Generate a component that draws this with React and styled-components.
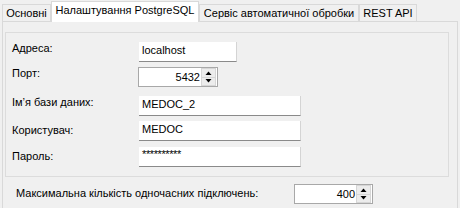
import React from "react";
import styled, { createGlobalStyle } from "styled-components";

const Global = createGlobalStyle`
  html, body { margin: 0; padding: 0; background: #f0f0f0; }
  body { font-family: "Liberation Sans", Arial, sans-serif; font-size: 11px; color: #000; }
`;

const Window = styled.div`
  width: 460px;
  height: 208px;
  overflow: hidden;
  background: #f0f0f0;
`;

const TabStrip = styled.div`
  display: flex;
  align-items: flex-end;
  height: 22px;
  padding-left: 2px;
`;

const Tab = styled.div`
  box-sizing: border-box;
  width: ${(p) => p.$w}px;
  height: ${(p) => (p.$active ? 21 : 17)}px;
  margin-bottom: ${(p) => (p.$active ? 0 : 1)}px;
  border: 1px solid #d9d9d9;
  border-bottom: none;
  background: ${(p) => (p.$active ? "#ffffff" : "#f0f0f0")};
  position: relative;
  z-index: ${(p) => (p.$active ? 2 : 0)};
  padding-top: 2px;
  line-height: 13px;
  text-align: center;
  white-space: nowrap;
`;

const Panel = styled.div`
  box-sizing: border-box;
  margin-top: -1px;
  margin-left: 2px;
  width: 456px;
  height: 200px;
  border: 1px solid #d9d9d9;
  padding: 10px 0 0 2px;
`;

const Group = styled.div`
  box-sizing: border-box;
  width: 444px;
  height: 145px;
  border: 1px solid #dcdcdc;
  padding: 9px 0 0 6px;
  display: flex;
  flex-direction: column;
`;

const Row = styled.div`
  display: flex;
  align-items: flex-start;
  height: 20px;
  margin-top: ${(p) => p.$mt || 0}px;
`;

const Label = styled.div`
  width: ${(p) => p.$w || 127}px;
  line-height: 13px;
  margin-top: ${(p) => p.$dy || 0}px;
  white-space: nowrap;
`;

const TextBox = styled.div`
  box-sizing: border-box;
  width: ${(p) => p.$w}px;
  height: 20px;
  background: #fff;
  border-bottom: 1px solid #8a8a8a;
  border-right: 1px solid #d4d4d4;
  padding: 2px 3px 0 3px;
  line-height: 13px;
  white-space: nowrap;
  overflow: hidden;
`;

const Password = styled.span`
  letter-spacing: -0.4px;
  position: relative;
  top: -1px;
`;

const Spinner = styled.div`
  box-sizing: border-box;
  width: ${(p) => p.$w}px;
  height: 20px;
  margin-left: ${(p) => p.$ml || 0}px;
  background: #fff;
  border: 1px solid #a8a8a8;
  display: flex;
  align-items: stretch;
`;

const SpinValue = styled.div`
  flex: 1;
  text-align: right;
  line-height: 13px;
  padding-top: 3px;
  padding-right: 1px;
`;

const SpinButtons = styled.div`
  width: 15px;
  display: flex;
  flex-direction: column;
  margin: 0 1px 0 0;
`;

const SpinButton = styled.div`
  flex: 1;
  display: flex;
  align-items: center;
  justify-content: center;
  background: #ececec;
  border: 1px solid #d6d6d6;
  border-top-width: ${(p) => (p.$down ? 0 : 1)}px;
`;

const Arrow = ({ down }) => (
  <svg width="7" height="4" viewBox="0 0 7 4">
    {down ? <polygon points="0.5,0 6.5,0 3.5,3.5" fill="#000" /> : <polygon points="0.5,4 6.5,4 3.5,0.5" fill="#000" />}
  </svg>
);

const NumericUpDown = ({ value, w, ml }) => (
  <Spinner $w={w} $ml={ml}>
    <SpinValue>{value}</SpinValue>
    <SpinButtons>
      <SpinButton>
        <Arrow />
      </SpinButton>
      <SpinButton $down>
        <Arrow down />
      </SpinButton>
    </SpinButtons>
  </Spinner>
);

const MaxRow = styled.div`
  display: flex;
  align-items: flex-start;
  margin-top: 7px;
  padding-left: 11px;
  height: 20px;
`;

export default function App() {
  return (
    <Window>
      <Global />
      <TabStrip>
        <Tab $w={49}>Основні</Tab>
        <Tab $w={148} $active>
          Налаштування PostgreSQL
        </Tab>
        <Tab $w={160}>Сервіс автоматичної обробки</Tab>
        <Tab $w={58}>REST API</Tab>
      </TabStrip>
      <Panel>
        <Group>
          <Row>
            <Label $dy={0}>Адреса:</Label>
            <TextBox $w={98}>localhost</TextBox>
          </Row>
          <Row $mt={5}>
            <Label $dy={0}>Порт:</Label>
            <NumericUpDown value="5432" w={80} ml={-1} />
          </Row>
          <Row $mt={9}>
            <Label $dy={0}>Ім’я бази даних:</Label>
            <TextBox $w={162}>MEDOC_2</TextBox>
          </Row>
          <Row $mt={5}>
            <Label $dy={3}>Користувач:</Label>
            <TextBox $w={162}>MEDOC</TextBox>
          </Row>
          <Row $mt={6}>
            <Label $dy={3}>Пароль:</Label>
            <TextBox $w={162}>
              <Password>**********</Password>
            </TextBox>
          </Row>
        </Group>
        <MaxRow>
          <Label $w={278} $dy={3}>
            Максимальна кількість одночасних підключень:
          </Label>
          <NumericUpDown value="400" w={79} />
        </MaxRow>
      </Panel>
    </Window>
  );
}
